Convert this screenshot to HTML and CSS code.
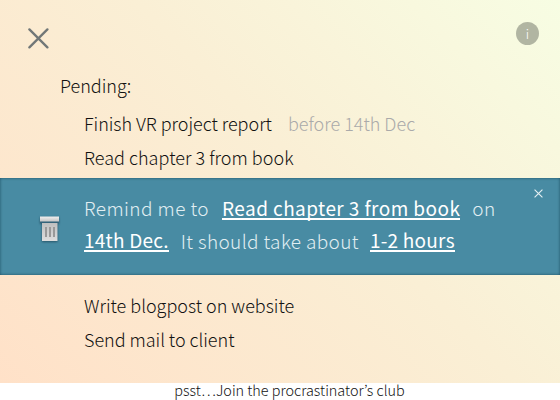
FILE: index.html
```html
<!DOCTYPE html>
<html lang="en">
<head>
<meta charset="utf-8">
<title>Tasks</title>
<link rel="stylesheet" href="styles.css">
</head>
<body>
<main class="panel">
  <header class="topbar">
    <svg class="close" viewBox="0 0 22 22"><path d="M2.400 2.400 20.400 20.400M20.400 2.400 2.400 20.400"/></svg>
    <span class="info">i</span>
  </header>
  <h1 class="heading">Pending:</h1>
  <ul class="tasks">
    <li><span class="tight">Finish VR project report</span><span class="due">before 14th Dec</span></li>
    <li><span class="loose">Read chapter 3 from book</span></li>
  </ul>
  <section class="editor">
    <svg class="trash" viewBox="0 0 20 28">
      <defs>
        <linearGradient id="lid" x2="0" y2="1"><stop stop-color="#f0f0f0"/><stop offset="1" stop-color="#c4c4c4"/></linearGradient>
        <linearGradient id="can" x2="0" y2="1"><stop stop-color="#bfbfbf"/><stop offset="1" stop-color="#dedede"/></linearGradient>
      </defs>
      <path fill="url(#can)" d="M3 7h15.500v18h-15.500z"/>
      <path fill="#999" d="M6 11h2v10H6zM10 11h2v10h-2zM14 11h2v10h-2z"/>
      <path fill="#33637a" d="M1 5h19v2h-19z"/>
      <path fill="url(#lid)" d="M1 0.500h19v5h-19z"/>
    </svg>
    <div class="sentence">
      <div class="line"><span>Remind me to</span><span class="field f-read">Read chapter 3 from book</span><span>on</span></div>
      <div class="line"><span class="field short">14th Dec.</span><span class="effort">It should take about</span><span class="field short">1-2 hours</span></div>
    </div>
    <svg class="dismiss" viewBox="0 0 8 8"><path d="M.5 .5 7.5 7.5M7.5 .5 .5 7.5"/></svg>
  </section>
  <ul class="tasks later">
    <li><span>Write blogpost on website</span></li>
    <li><span class="tight">Send mail to client</span></li>
  </ul>
</main>
<footer class="footer">psst…Join the procrastinator’s club</footer>
</body>
</html>
```
FILE: styles.css
```css
* { box-sizing: border-box; }
body {
  margin: 0;
  height: 400px;
  overflow: hidden;
  background: #fff;
  color: #111;
  font: 300 18px/34px "Noto Sans CJK KR Light", "Noto Sans CJK KR", "Noto Sans", sans-serif;
  white-space: nowrap;
}
.panel {
  height: 383px;
  background: linear-gradient(45deg, #ffe1c8 0%, #faefd5 55%, #f7fde3 100%);
}
.topbar {
  display: flex;
  justify-content: space-between;
  height: 68px;
  padding: 22px 21px 0 27px;
}
.close { width: 22px; height: 22px; margin-top: 5px; }
.close path { stroke: #717777; stroke-width: 2.3; stroke-linecap: round; }
.info {
  width: 23px;
  height: 23px;
  border-radius: 50%;
  background: #b1b5a2;
  color: #fff;
  font-size: 13px;
  line-height: 23px;
  text-align: center;
}
.heading { margin: 0 0 4px 60px; font: inherit; }
.tasks { margin: 0; padding: 0 0 0 84px; list-style: none; }
.tasks li { display: flex; height: 34px; }
.tight { letter-spacing: -.03px; }
.loose { letter-spacing: .03px; }
.due { margin-left: 16px; color: #aaa; }
.editor {
  position: relative;
  display: flex;
  height: 97px;
  margin-top: 4px;
  padding: 14px 0 0 39px;
  background: #488ba3;
  color: #e1eef2;
  box-shadow: inset 0 0 3px #1d5063;
}
.trash { width: 20px; height: 28px; margin: 24px 25px 0 0; filter: drop-shadow(0 1px 1px #265569); }
.line { display: flex; height: 32px; line-height: 32px; font-size: 19px; letter-spacing: .43px; }
.field {
  height: 28px;
  border-bottom: 2px solid #fff;
  color: #fff;
  font-family: "Noto Sans CJK KR", "Noto Sans", sans-serif;
  font-weight: 400;
}
.short { letter-spacing: .24px; }
.f-read { margin: 0 12px 0 13px; }
.effort { margin: 0 11px 0 12px; padding-top: 1px; letter-spacing: .37px; }
.dismiss { position: absolute; top: 11px; right: 17px; width: 9px; height: 9px; }
.dismiss path { stroke: #e5f0f3; stroke-width: 1; }
.later { padding-top: 13px; }
.footer { height: 17px; padding-left: 19px; text-align: center; font-size: 14.4px; line-height: 14px; }
```
